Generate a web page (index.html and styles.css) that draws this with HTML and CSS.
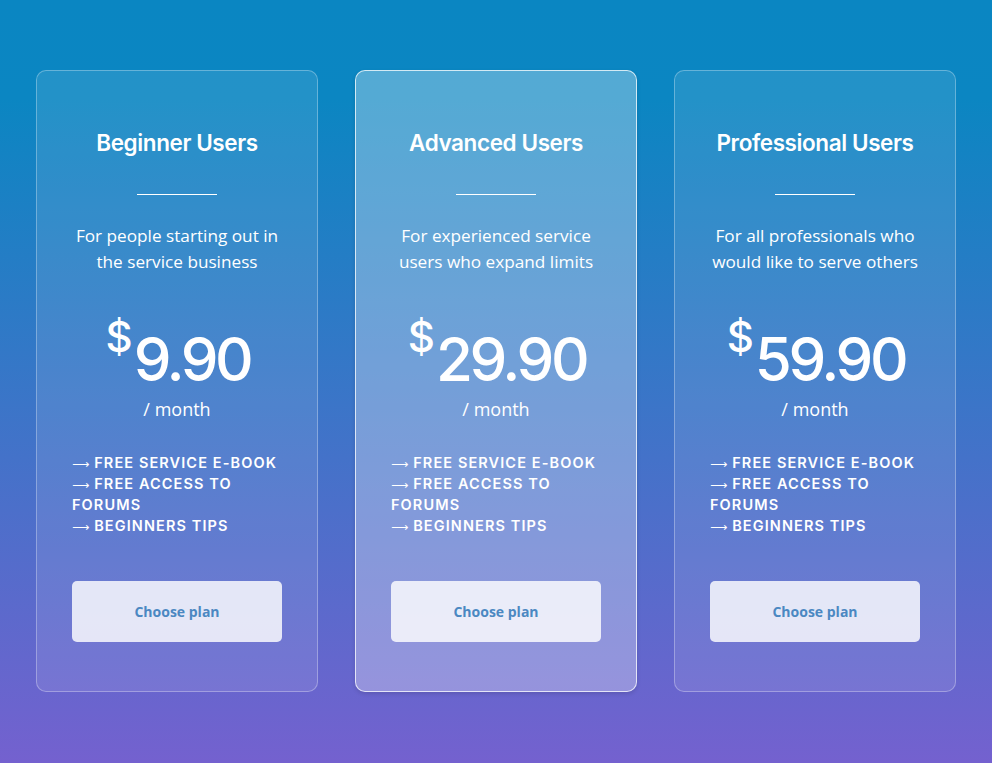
FILE: index.html
```html
<!DOCTYPE html>
<html lang="en">
<head>
  <meta charset="UTF-8" />
  <title>Pricing</title>
  <link rel="stylesheet" href="styles.css">
</head>
<body>

<div class="plans">
  <div class="plan">
    <h2>Beginner Users</h2>
    <div class="divider"></div>
    <p class="desc">For people starting out in the service business</p>
    <div class="price"><span class="cur">$</span><span class="amount">9.90</span></div>
    <div class="period">/ month</div>
    <ul class="features">
      <li>Free service e-book</li>
      <li>Free access to forums</li>
      <li>Beginners tips</li>
    </ul>
    <button class="btn">Choose plan</button>
  </div>

  <div class="plan featured">
    <h2>Advanced Users</h2>
    <div class="divider"></div>
    <p class="desc">For experienced service users who expand limits</p>
    <div class="price"><span class="cur">$</span><span class="amount">29.90</span></div>
    <div class="period">/ month</div>
    <ul class="features">
      <li>Free service e-book</li>
      <li>Free access to forums</li>
      <li>Beginners tips</li>
    </ul>
    <button class="btn">Choose plan</button>
  </div>

  <div class="plan">
    <h2>Professional Users</h2>
    <div class="divider"></div>
    <p class="desc">For all professionals who would like to serve others</p>
    <div class="price"><span class="cur">$</span><span class="amount">59.90</span></div>
    <div class="period">/ month</div>
    <ul class="features">
      <li>Free service e-book</li>
      <li>Free access to forums</li>
      <li>Beginners tips</li>
    </ul>
    <button class="btn">Choose plan</button>
  </div>
</div>

</body>
</html>
```

FILE: styles.css
```css
html, body { margin: 0; height: 100%; }
body {
  font-family: 'Open Sans', sans-serif;
  color: #fff;
  background: linear-gradient(to bottom, #0a86c2 0%, #0b86c2 13%, #7461cf 100%);
  padding-top: 70px;
  box-sizing: border-box;
}
.plans { width: 920px; margin: 0 auto; display: grid; grid-template-columns: repeat(3, 1fr); align-items: start; gap: 37px; }
.plan {
  border: 1px solid rgba(255,255,255,0.3);
  border-radius: 10px;
  background: rgba(255,255,255,0.1);
  padding: 57px 35px 49px;
  text-align: center;
}
.plan.featured { background: rgba(255,255,255,0.3); border-color: rgba(255,255,255,0.75); box-shadow: 0 2px 4px rgba(0,0,0,0.12); }
.plan h2 { font-family: 'Inter', sans-serif; font-size: 22.5px; font-weight: 600; letter-spacing: -0.4px; line-height: 30px; margin: 0; }
.divider { width: 80px; height: 1px; background: #fff; margin: 36px auto 0; }
.desc { font-size: 17.2px; line-height: 26px; margin: 28px -4px 0; }
.price { display: flex; justify-content: center; align-items: flex-start; margin-top: 54px; font-family: 'Inter', sans-serif; font-weight: 500; }
.cur { font-size: 42px; line-height: 42px; margin-top: -13px; margin-left: 2px; margin-right: 1px; }
.amount { font-size: 60px; line-height: 60px; letter-spacing: -3.4px; }
.period { font-size: 18px; line-height: 26px; margin-top: 7px; }
.features { list-style: none; padding: 0; margin: 30px 0 0; text-align: left; font-family: 'Inter', sans-serif; font-size: 14.5px; font-weight: 600; line-height: 21px; letter-spacing: 1.1px; text-transform: uppercase; }
.features li::before { content: "\27F6"; font-family: 'DejaVu Sans', sans-serif; font-size: 12px; font-weight: 400; line-height: 12px; letter-spacing: 0; margin-right: 5px; }
.btn {
  display: block; width: 100%; height: 61px; margin-top: 45px;
  border: none; border-radius: 5px;
  background: rgba(255,255,255,0.82);
  color: #4b88c2;
  font-family: 'Open Sans', sans-serif; font-size: 14px; font-weight: 700;
}
```
